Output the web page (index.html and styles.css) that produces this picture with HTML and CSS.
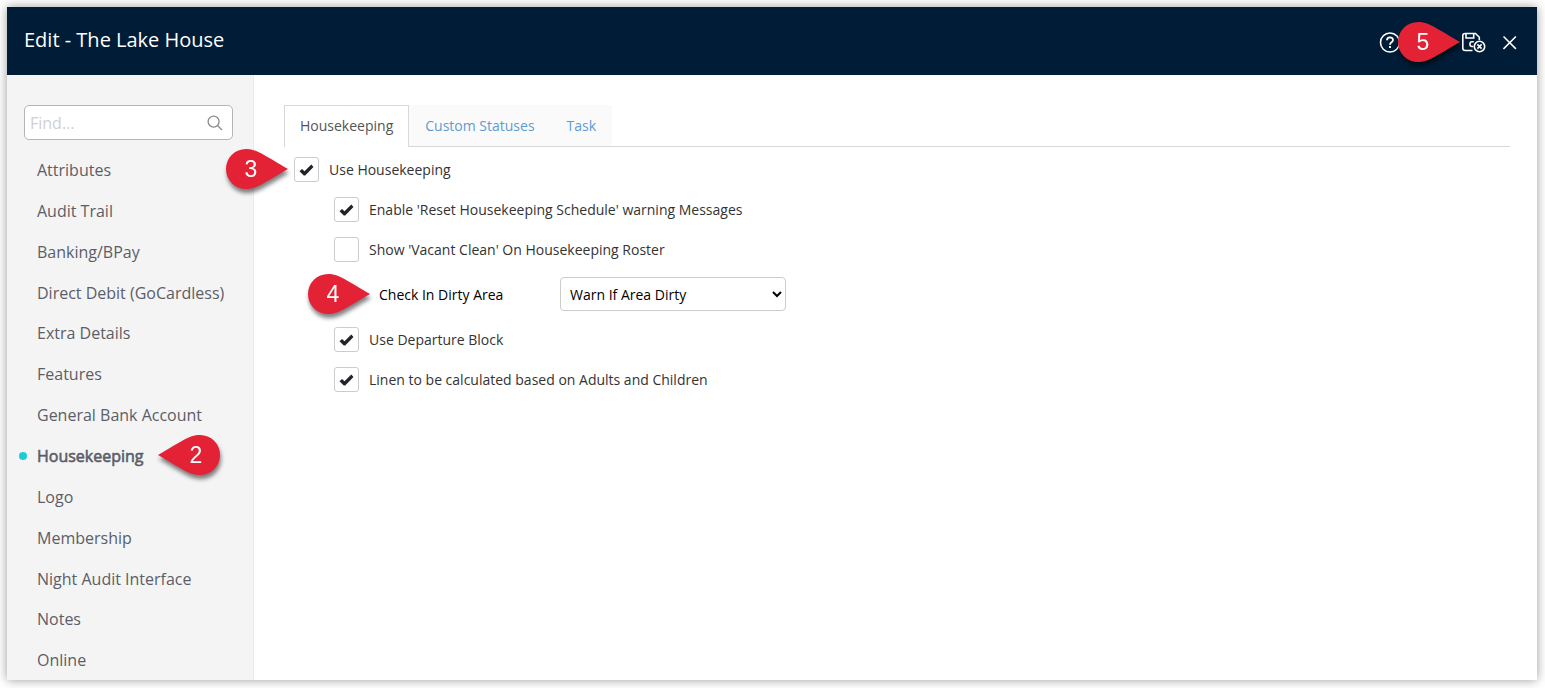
FILE: index.html
```html
<!DOCTYPE html>
<html lang="en">
<head>
  <meta charset="UTF-8">
  <meta name="viewport" content="width=device-width, initial-scale=1.0">
  <title>Edit - The Lake House</title>
  <link rel="stylesheet" href="styles.css">
</head>
<body>
  <svg class="defs" width="0" height="0">
    <symbol id="pin" viewBox="0 0 62 40">
      <path d="M20 0C31 0 40 7.500 62 20C40 32.500 31 40 20 40A20 20 0 0 1 20 0Z" fill="#e32236"/>
    </symbol>
    <symbol id="check" viewBox="0 0 15 12">
      <path d="M0.500 7.300L3 4.900L5.500 7.200L12.300 0.600L14.500 2.900L6.200 11.500H4.800Z" fill="#212529"/>
    </symbol>
  </svg>

  <div class="window">
    <header>
      <h1>Edit - The Lake House</h1>
      <div class="actions">
        <svg class="help" width="22" height="22" viewBox="0 0 22 22" fill="none" stroke="#fff" stroke-width="1.600">
          <circle cx="11" cy="10.500" r="9.500"/>
          <path d="M8 8.300C8 4.500 14 4.500 14 8C14 10.500 11 10 11 12.700" stroke-width="1.800"/>
          <path d="M11 14.100V16" stroke-width="1.900"/>
        </svg>
        <svg class="save" width="25" height="22" viewBox="0 0 25 22" fill="none" stroke="#fff" stroke-width="1.600">
          <path d="M11.500 18.500H4.300Q1.800 18.500 1.800 16V3.500Q1.800 1.500 4.300 1.500H14.500L18.300 5.300V8"/>
          <path d="M5 1.500V6H12.700V1.500"/>
          <path d="M12.800 9.800H11Q9 9.800 9 11.800V12.500Q9 14.500 11 14.500H12.300"/>
          <circle cx="18.500" cy="14.500" r="5.200"/>
          <path d="M16.400 12.400L20.600 16.600M20.600 12.400L16.400 16.600"/>
        </svg>
        <svg class="close" width="14" height="14" viewBox="0 0 14 14" stroke="#fff" stroke-width="1.500">
          <path d="M0.500 0.500L12.900 12.900M12.900 0.500L0.500 12.900"/>
        </svg>
      </div>
    </header>

    <div class="content">
      <aside>
        <div class="search">
          <input type="text" placeholder="Find...">
          <svg width="16" height="16" viewBox="0 0 16 16" fill="none" stroke="#8c8c8c" stroke-width="1.300">
            <circle cx="6.600" cy="6.600" r="5.500"/>
            <path d="M10.500 10.500L15 15"/>
          </svg>
        </div>
        <ul class="menu">
          <li>Attributes</li>
          <li>Audit Trail</li>
          <li>Banking/BPay</li>
          <li>Direct Debit (GoCardless)</li>
          <li>Extra Details</li>
          <li>Features</li>
          <li>General Bank Account</li>
          <li class="active">Housekeeping</li>
          <li>Logo</li>
          <li>Membership</li>
          <li>Night Audit Interface</li>
          <li>Notes</li>
          <li>Online</li>
        </ul>
      </aside>

      <main>
        <ul class="tabs">
          <li class="selected">Housekeeping</li>
          <li>Custom Statuses</li>
          <li>Task</li>
        </ul>
        <div class="options">
          <div class="row">
            <span class="box"><svg width="15" height="12"><use href="#check"/></svg></span>
            Use Housekeeping
          </div>
          <div class="row sub">
            <span class="box"><svg width="15" height="12"><use href="#check"/></svg></span>
            Enable 'Reset Housekeeping Schedule' warning Messages
          </div>
          <div class="row sub">
            <span class="box"></span>
            Show 'Vacant Clean' On Housekeeping Roster
          </div>
          <div class="row field">
            <label for="dirty">Check In Dirty Area</label>
            <select id="dirty">
              <option>Warn If Area Dirty</option>
            </select>
          </div>
          <div class="row sub">
            <span class="box"><svg width="15" height="12"><use href="#check"/></svg></span>
            Use Departure Block
          </div>
          <div class="row sub">
            <span class="box"><svg width="15" height="12"><use href="#check"/></svg></span>
            Linen to be calculated based on Adults and Children
          </div>
        </div>
      </main>
    </div>
  </div>

  <!-- step markers -->
  <div class="pin pin-left step2"><svg width="62" height="40"><use href="#pin"/></svg><span>2</span></div>
  <div class="pin step3"><svg width="62" height="40"><use href="#pin"/></svg><span>3</span></div>
  <div class="pin step4"><svg width="62" height="40"><use href="#pin"/></svg><span>4</span></div>
  <div class="pin step5"><svg width="62" height="40"><use href="#pin"/></svg><span>5</span></div>
</body>
</html>
```

FILE: styles.css
```css
* {
  box-sizing: border-box;
}

body {
  margin: 0;
  padding: 7px 8px 8px 7px;
  height: 688px;
  overflow: hidden;
  background-color: #fff;
  font-family: "Open Sans", sans-serif;
  font-size: 14px;
  color: #333;
}

ul {
  list-style-type: none;
  margin: 0;
  padding: 0;
}

.defs {
  position: absolute;
}

.window {
  display: flex;
  flex-direction: column;
  height: 673px;
  background-color: #fff;
  box-shadow: 0 0 10px rgba(0, 0, 0, 0.4);
}

header {
  display: flex;
  justify-content: space-between;
  height: 68px;
  flex-shrink: 0;
  padding: 0 20px 0 17px;
  background-color: #001c36;
  color: #fff;
}

h1 {
  margin: 0;
  font-size: 20px;
  font-weight: 400;
  line-height: 65px;
}

.actions {
  display: flex;
  align-items: center;
  padding-top: 3px;
}

.save {
  margin-left: 60px;
}

.close {
  margin-left: 17px;
}

.content {
  display: flex;
  flex: 1;
  min-height: 0;
}

aside {
  width: 247px;
  flex-shrink: 0;
  padding: 30px 20px 0 17px;
  background-color: #f4f4f4;
  border-right: 1px solid #ebebeb;
  overflow: hidden;
}

.search {
  display: flex;
  align-items: center;
  height: 35px;
  padding: 0 9px 0 5px;
  background-color: #fff;
  border: 1px solid #b5b5b5;
  border-radius: 5px;
}

.search input {
  flex: 1;
  min-width: 0;
  padding: 0;
  border: none;
  outline: none;
  background: none;
  font: 16px "Open Sans", sans-serif;
}

.search input::placeholder {
  color: #d0d0d0;
}

.menu {
  padding: 10.100px 0 0 13px;
}

.menu li {
  height: 40.850px;
  line-height: 40.850px;
  font-size: 16px;
  color: #5b5e68;
  white-space: nowrap;
}

.menu .active {
  display: flex;
  align-items: center;
  margin-left: -18px;
  -webkit-text-stroke: 0.6px #5b5e68;
}

.menu .active::before {
  content: "";
  width: 8px;
  height: 8px;
  margin-right: 10px;
  border-radius: 50%;
  background-color: #1dcbd8;
}

main {
  flex: 1;
  padding: 30px 27px 0 30px;
}

.tabs {
  display: flex;
  height: 42px;
  border-bottom: 1px solid #d8d8d8;
}

.tabs li {
  height: 41px;
  padding: 0 16px;
  background-color: #fafafa;
  color: #5f9bd1;
  line-height: 41px;
}

.tabs .selected {
  height: 42px;
  padding: 0 15px;
  border: 1px solid #d8d8d8;
  border-bottom: none;
  background-color: #fff;
  color: #555;
  line-height: 39px;
}

.options {
  padding: 2px 0 0 10px;
}

.row {
  display: flex;
  align-items: center;
  gap: 10px;
  height: 40px;
}

.sub {
  padding-left: 40px;
}

.box {
  display: flex;
  align-items: center;
  justify-content: center;
  width: 25px;
  height: 25px;
  border: 1px solid #ccc;
  border-radius: 3px;
  background-color: #fff;
}

.box svg {
  margin-top: 2px;
}

.field {
  gap: 0;
  height: 50px;
  padding-left: 85px;
  color: #000;
}

.field label {
  width: 181px;
}

select {
  width: 226px;
  height: 34px;
  padding: 0 0 0 5px;
  border: 1px solid #ccc;
  border-radius: 4px;
  background-color: #fff;
  color: #000;
  font: 14px "Open Sans", sans-serif;
}

.pin {
  position: absolute;
  width: 62px;
  height: 40px;
  filter: drop-shadow(1px 4px 2px rgba(0, 0, 0, 0.5));
}

.pin svg {
  display: block;
}

.pin span {
  position: absolute;
  top: 0;
  left: 5px;
  width: 40px;
  color: #fff;
  font: 23px/41px "Liberation Sans", Arial, sans-serif;
  text-align: center;
}

.pin-left svg {
  transform: scaleX(-1);
}

.pin-left span {
  left: 18px;
}

.step2 {
  left: 158px;
  top: 435px;
}

.step3 {
  left: 226px;
  top: 149px;
}

.step4 {
  left: 308px;
  top: 274px;
}

.step5 {
  left: 1398px;
  top: 22px;
}
```
